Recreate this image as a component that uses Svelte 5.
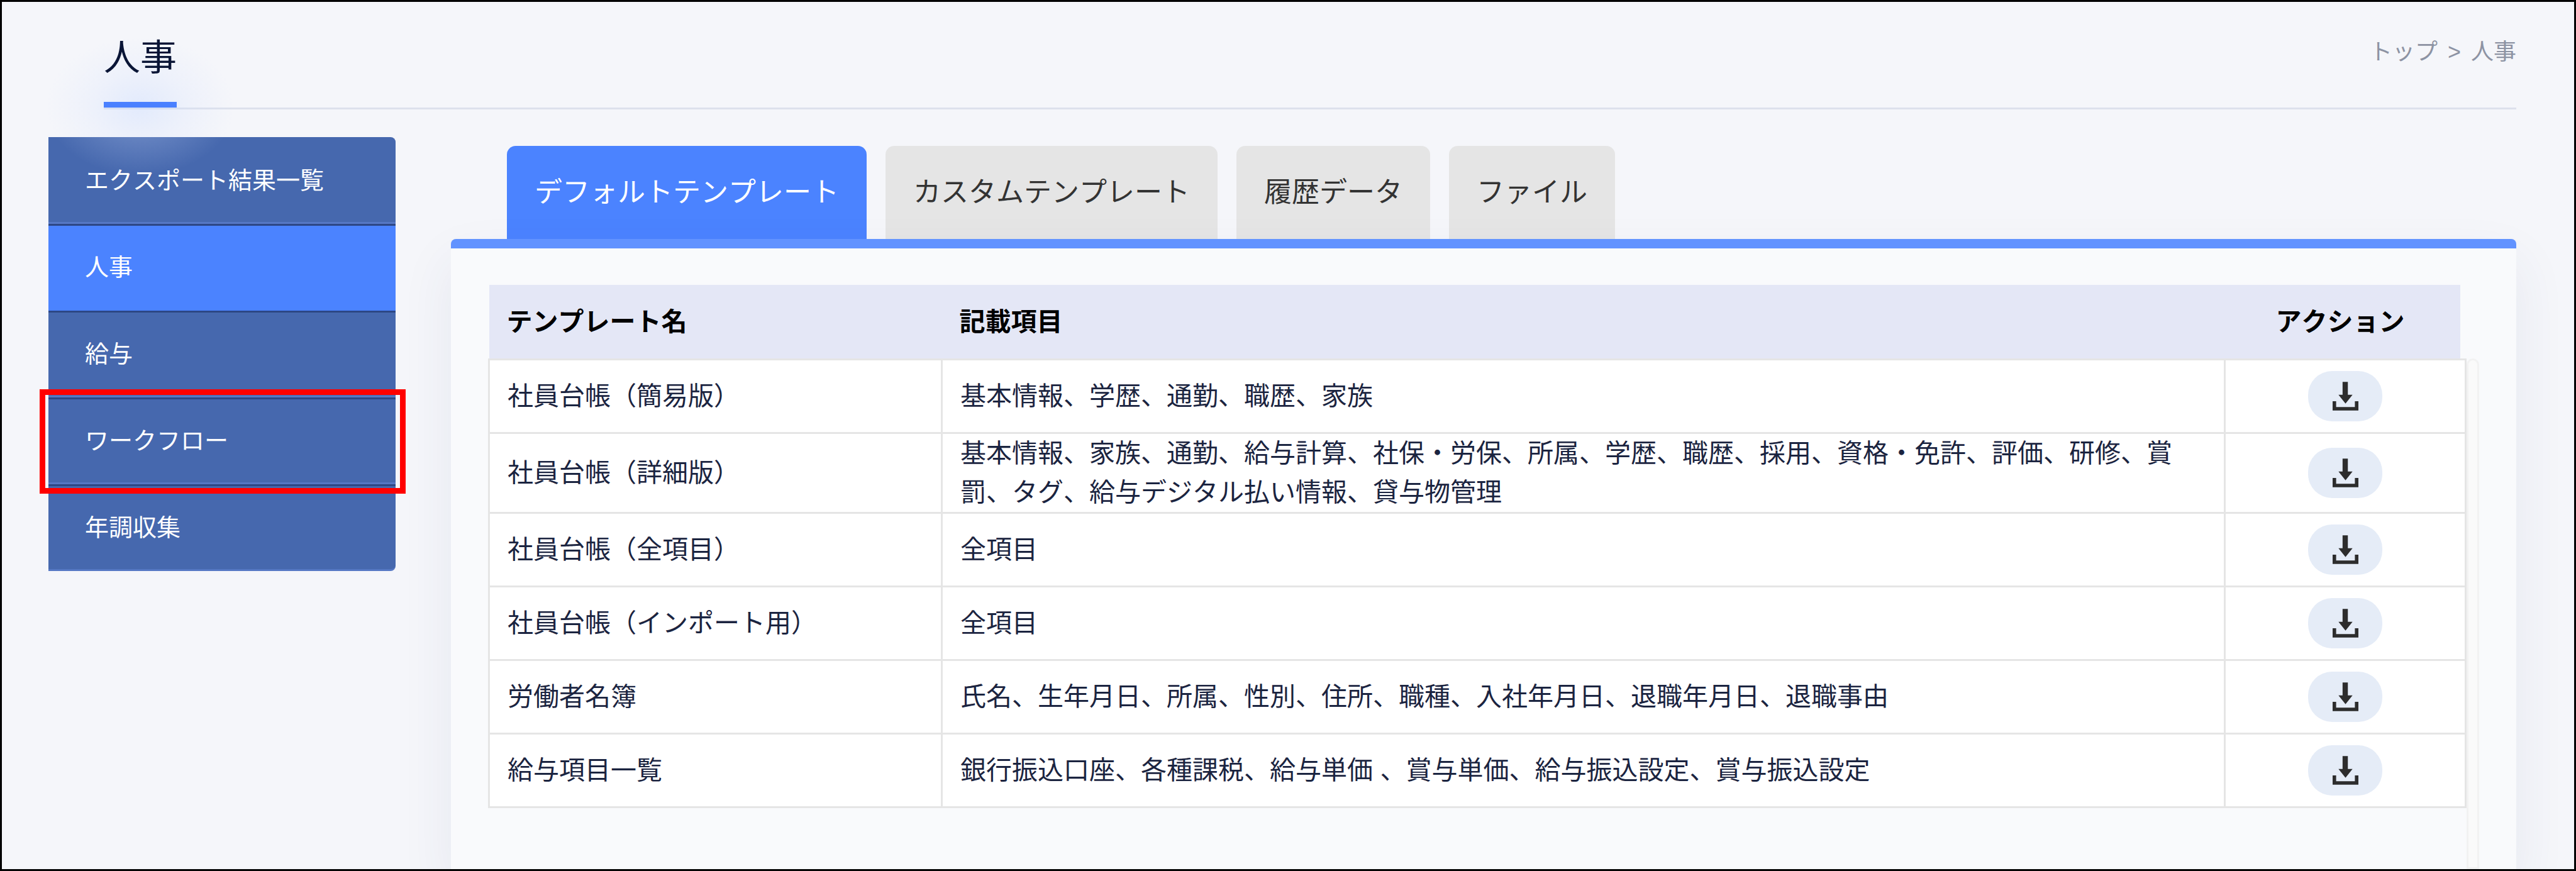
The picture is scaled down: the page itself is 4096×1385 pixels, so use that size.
<script>
  const menu = ['エクスポート結果一覧', '人事', '給与', 'ワークフロー', '年調収集'];
  const tabs = ['デフォルトテンプレート', 'カスタムテンプレート', '履歴データ', 'ファイル'];
  const rows = [
    ['社員台帳（簡易版）', '基本情報、学歴、通勤、職歴、家族'],
    ['社員台帳（詳細版）', '基本情報、家族、通勤、給与計算、社保・労保、所属、学歴、職歴、採用、資格・免許、評価、研修、賞罰、タグ、給与デジタル払い情報、貸与物管理'],
    ['社員台帳（全項目）', '全項目'],
    ['社員台帳（インポート用）', '全項目'],
    ['労働者名簿', '氏名、生年月日、所属、性別、住所、職種、入社年月日、退職年月日、退職事由'],
    ['給与項目一覧', '銀行振込口座、各種課税、給与単価 、賞与単価、給与振込設定、賞与振込設定'],
  ];
  let current = $state('人事');
  let activeTab = $state(0);
</script>

<div class="frame">
  <header class="head">
    <h1>人事</h1>
    <nav class="crumbs" aria-label="パンくず"><a href="#top">トップ</a><span>&gt;</span><span>人事</span></nav>
  </header>

  <div class="columns">
    <nav class="side" aria-label="メニュー">
      {#each menu as item}
        <a
          href="#{item}"
          class:active={item === current}
          class:marked={item === 'ワークフロー'}
          onclick={() => (current = item)}>{item}</a>
      {/each}
    </nav>

    <main>
      <div class="tabs" role="tablist">
        {#each tabs as tab, i}
          <button role="tab" aria-selected={i === activeTab} class:on={i === activeTab} onclick={() => (activeTab = i)}>{tab}</button>
        {/each}
      </div>
      <section class="panel">
        <div class="sheet">
          <table>
            <colgroup><col class="c-name" /><col /><col class="c-action" /></colgroup>
            <thead>
              <tr><th>テンプレート名</th><th>記載項目</th><th class="mid">アクション</th></tr>
            </thead>
            <tbody>
              {#each rows as [name, fields]}
                <tr>
                  <td>{name}</td>
                  <td>{fields}</td>
                  <td class="mid">
                    <button class="download" aria-label="{name}をダウンロード">
                      <svg viewBox="0 0 44 49" aria-hidden="true">
                        <path d="M17 0h9v22h8L22 37 10 22h7z" />
                        <path d="M0 33h6v10h32V33h6v16H0z" />
                      </svg>
                    </button>
                  </td>
                </tr>
              {/each}
            </tbody>
          </table>
          <div class="track"></div>
        </div>
      </section>
    </main>
  </div>
</div>

<style>
  :global(body) {
    background: #f5f6fa;
  }
  .frame {
    box-sizing: border-box;
    display: flex;
    flex-direction: column;
    height: 100vh;
    overflow: hidden;
    border: 3px solid #000;
    background: #f5f6fa;
    color: #1b2440;
    font-family: 'Liberation Sans', 'Noto Sans CJK JP', sans-serif;
    font-size: 41px;
    font-kerning: none;
  }
  .head {
    display: flex;
    justify-content: space-between;
    align-items: flex-start;
    margin: 0 92px 0 162px;
    height: 168px;
    border-bottom: 3px solid #dde1ec;
  }
  h1 {
    box-sizing: border-box;
    position: relative;
    z-index: 2;
    margin: 0;
    height: 168px;
    padding-top: 49px;
    color: #0a1536;
    font-size: 58px;
    font-weight: 400;
    line-height: 80px;
  }
  h1::before {
    content: '';
    position: absolute;
    inset: auto 0 0;
    height: 9px;
    background: #4a80ff;
  }
  /* soft light under the page title */
  h1::after {
    content: '';
    position: absolute;
    inset: 56px -92px -108px;
    z-index: -1;
    background: radial-gradient(closest-side, rgba(200, 218, 255, 0.42), rgba(208, 222, 255, 0.2) 50%, rgba(215, 228, 255, 0));
    pointer-events: none;
  }
  .crumbs {
    display: flex;
    gap: 16px;
    padding-top: 50px;
    color: #8d93a3;
    font-size: 36px;
    line-height: 60px;
  }
  .crumbs a {
    color: inherit;
    text-decoration: none;
  }
  .columns {
    display: flex;
    flex: 1;
    gap: 88px;
    margin: 0 92px 0 74px;
    min-height: 0;
  }
  .side {
    display: flex;
    flex: none;
    flex-direction: column;
    width: 552px;
    margin-top: 44px;
  }
  .side a {
    box-sizing: border-box;
    position: relative;
    height: 138px;
    padding: 0 58px;
    border-top: 3px solid #2d4785;
    border-bottom: 3px solid #5678c4;
    background: #4668ae;
    color: #fff;
    font-size: 38px;
    line-height: 132px;
    text-decoration: none;
  }
  .side a:first-child {
    border-top-color: #4668ae;
    border-radius: 0 8px 0 0;
  }
  .side a:last-child {
    border-radius: 0 0 8px 0;
  }
  .side a.active {
    border-bottom-color: #4b83ff;
    background: #4b83ff;
  }
  .marked::after {
    content: '';
    position: absolute;
    inset: -16px -16px -18px -14px;
    z-index: 3;
    border: 9px solid #f00;
  }
  main {
    display: flex;
    flex: 1;
    flex-direction: column;
    margin-top: 58px;
    min-width: 0;
  }
  .tabs {
    display: flex;
    gap: 30px;
    padding-left: 89px;
  }
  .tabs button {
    height: 148px;
    padding: 0 44px;
    border: 0;
    border-radius: 14px 14px 0 0;
    background: #e5e5e5;
    color: #333;
    font: inherit;
    font-size: 44px;
    line-height: 64px;
  }
  .tabs .on {
    background: #4b83ff;
    color: #fff;
  }
  .panel {
    flex: 1;
    padding: 58px 59px 0;
    border-top: 15px solid #6293ff;
    border-radius: 8px 8px 0 0;
    background: #f9fafc;
    box-shadow: 0 36px 84px rgba(50, 60, 110, 0.08);
  }
  .sheet {
    display: flex;
    height: 100%;
  }
  table {
    flex: 1;
    height: max-content;
    border-collapse: collapse;
    table-layout: fixed;
    line-height: 62px;
  }
  .c-name {
    width: 720px;
  }
  .c-action {
    width: 383px;
  }
  th {
    height: 117px;
    padding: 0 28px;
    background: #e4e7f6;
    color: #000;
    font-weight: 700;
    text-align: left;
  }
  td {
    height: 114px;
    padding: 0 28px;
    border: 3px solid #e5e5e5;
    background: #fff;
  }
  .mid {
    text-align: center;
  }
  th.mid {
    padding-right: 44px;
    background: linear-gradient(to left, transparent 9px, #e4e7f6 9px);
  }
  .download {
    display: inline-flex;
    justify-content: center;
    align-items: center;
    width: 118px;
    height: 80px;
    padding: 0;
    border: 0;
    border-radius: 38px;
    background: #e5ecf7;
    vertical-align: middle;
  }
  .download svg {
    width: 41px;
    height: 46px;
    fill: #2d2d2d;
  }
  .track {
    box-sizing: border-box;
    width: 20px;
    margin-top: 117px;
    border: 3px solid #f2f2f2;
    border-radius: 10px 10px 0 0;
    background: #fafafa;
  }
</style>
